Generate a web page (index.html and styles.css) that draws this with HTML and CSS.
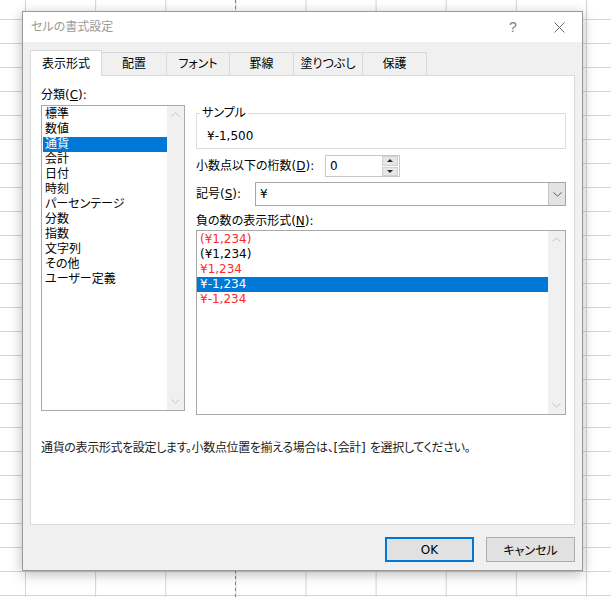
FILE: index.html
```html
<!DOCTYPE html>
<html lang="ja">
<head>
<meta charset="utf-8">
<title>セルの書式設定</title>
<link rel="stylesheet" href="styles.css">
</head>
<body>
<div class="dialog">
  <div class="titlebar">
    <span class="title">セルの書式設定</span>
    <span class="cap help">?</span>
    <span class="cap close"><svg width="11" height="11" viewBox="0 0 11 11"><path d="M0.5 0.5 L10.5 10.5 M10.5 0.5 L0.5 10.5" stroke="#6a6a6a" stroke-width="1" fill="none"/></svg></span>
  </div>
  <div class="dbody">
    <div class="tabs">
      <div class="tab active t1">表示形式</div>
      <div class="tab t2">配置</div>
      <div class="tab t3">フォント</div>
      <div class="tab t4">罫線</div>
      <div class="tab t5">塗りつぶし</div>
      <div class="tab t6">保護</div>
    </div>
    <div class="panel">
      <div class="cols">
        <div class="leftcol">
          <div class="lbl">分類(<u>C</u>):</div>
          <div class="listbox cat">
            <ul class="items">
              <li>標準</li>
              <li>数値</li>
              <li class="sel">通貨</li>
              <li>会計</li>
              <li>日付</li>
              <li>時刻</li>
              <li>パーセンテージ</li>
              <li>分数</li>
              <li>指数</li>
              <li>文字列</li>
              <li>その他</li>
              <li>ユーザー定義</li>
            </ul>
            <div class="vscroll">
              <span class="arrow"><svg width="9" height="5" viewBox="0 0 9 5"><path d="M0.5 4.5 L4.5 0.8 L8.5 4.5" fill="none" stroke="#c4c4c4"/></svg></span>
              <span class="arrow"><svg width="9" height="5" viewBox="0 0 9 5"><path d="M0.5 0.5 L4.5 4.2 L8.5 0.5" fill="none" stroke="#c4c4c4"/></svg></span>
            </div>
          </div>
        </div>
        <div class="rightcol">
          <fieldset class="sample">
            <legend>サンプル</legend>
            <div class="sval">¥-1,500</div>
          </fieldset>
          <div class="row spinrow">
            <span class="rlbl wdec">小数点以下の桁数(<u>D</u>):</span>
            <div class="spin">
              <span class="spinval">0</span>
              <div class="spinbtns">
                <span class="sb up"></span>
                <span class="sb down"></span>
              </div>
            </div>
          </div>
          <div class="row comborow">
            <span class="rlbl wsym">記号(<u>S</u>):</span>
            <div class="combo">
              <span class="comboval">¥</span>
              <span class="dropbtn"><svg width="9" height="5" viewBox="0 0 9 5"><path d="M0.5 0.5 L4.5 4.2 L8.5 0.5" fill="none" stroke="#606060"/></svg></span>
            </div>
          </div>
          <div class="lbl neglbl">負の数の表示形式(<u>N</u>):</div>
          <div class="listbox neg">
            <ul class="items negitems">
              <li class="red">(¥1,234)</li>
              <li>(¥1,234)</li>
              <li class="red">¥1,234</li>
              <li class="sel">¥-1,234</li>
              <li class="red">¥-1,234</li>
            </ul>
            <div class="vscroll">
              <span class="arrow"><svg width="9" height="5" viewBox="0 0 9 5"><path d="M0.5 4.5 L4.5 0.8 L8.5 4.5" fill="none" stroke="#c4c4c4"/></svg></span>
              <span class="arrow"><svg width="9" height="5" viewBox="0 0 9 5"><path d="M0.5 0.5 L4.5 4.2 L8.5 0.5" fill="none" stroke="#c4c4c4"/></svg></span>
            </div>
          </div>
        </div>
      </div>
      <p class="desc">通貨の表示形式を設定します。小数点位置を揃える場合は、[会計] を選択してください。</p>
    </div>
    <div class="buttons">
      <button class="btn default">OK</button>
      <button class="btn">キャンセル</button>
    </div>
  </div>
</div>
</body>
</html>
```

FILE: styles.css
```css
* { box-sizing: border-box; }
html, body { margin: 0; padding: 0; }
body {
  width: 611px;
  height: 597px;
  overflow: hidden;
  position: relative;
  background-color: #fff;
  background-image:
    repeating-linear-gradient(to bottom, #808080 0 3px, transparent 3px 6px),
    linear-gradient(to right, #d4d4d4 1px, transparent 1px),
    linear-gradient(to bottom, #d4d4d4 1px, transparent 1px);
  background-size: 1px 100%, 70.125px 100%, 100% 24px;
  background-position: 235px 0, 25px 0, 0 19px;
  background-repeat: no-repeat, repeat-x, repeat-y;
  font-family: "DejaVu Sans", "Noto Sans CJK JP", sans-serif;
  font-size: 12px;
  font-feature-settings: "palt";
  color: #000;
}

.dialog {
  position: absolute;
  left: 22px;
  top: 11px;
  width: 561px;
  height: 560px;
  border: 1px solid #9a9a9a;
  background: #f0f0f0;
  box-shadow: 0 3px 12px rgba(0, 0, 0, 0.28);
  display: flex;
  flex-direction: column;
}

.titlebar {
  height: 30px;
  background: #fff;
  display: flex;
  align-items: center;
}
.title {
  flex: 1;
  padding-left: 8px;
  color: #9a9a9a;
  line-height: 16px;
}
.cap {
  width: 46px;
  height: 30px;
  display: flex;
  align-items: center;
  justify-content: center;
}
.help {
  font-family: "Liberation Sans", sans-serif;
  font-size: 14px;
  color: #808080;
}

.dbody {
  flex: 1;
  padding: 8px 0 0 7px;
}

.tabs {
  display: flex;
  align-items: flex-end;
  height: 25px;
}
.tab {
  height: 23px;
  border: 1px solid #d9d9d9;
  border-bottom: 0;
  margin-right: -1px;
  display: flex;
  align-items: center;
  justify-content: center;
  line-height: 14px;
  background: #f0f0f0;
}
.tab.active {
  height: 26px;
  background: #fff;
  margin-bottom: -1px;
  position: relative;
  z-index: 1;
}
.t1 { width: 72px; }
.t2 { width: 66px; }
.t3 { width: 64px; }
.t4 { width: 65px; }
.t5 { width: 70px; }
.t6 { width: 65px; }

.panel {
  width: 545px;
  height: 450px;
  background: #fff;
  border: 1px solid #d9d9d9;
  padding: 10px 0 0 10px;
}

.cols {
  display: flex;
  align-items: flex-start;
  gap: 11px;
}

.lbl {
  line-height: 18px;
  height: 18px;
}
.leftcol { width: 144px; }

.listbox {
  display: flex;
  border: 1px solid #a9a9a9;
  background: #fff;
  margin-top: 1px;
}
.cat { width: 144px; height: 306px; }
.neg { width: 370px; height: 185px; }

.items {
  flex: 1;
  list-style: none;
  margin: 0;
  padding: 1px 0 0 1px;
}
.items li {
  height: 15px;
  line-height: 15px;
  padding-left: 2px;
  white-space: nowrap;
}
.negitems { padding: 1px 0 0 0; }
.negitems li { padding-left: 3px; }
.items li.sel { background: #0078d7; color: #fff; }
.items li.red { color: #ff2a2a; }

.vscroll {
  width: 17px;
  background: #f0f0f0;
  display: flex;
  flex-direction: column;
  justify-content: space-between;
}
.arrow {
  height: 17px;
  display: flex;
  align-items: center;
  justify-content: center;
}

.rightcol {
  width: 370px;
  margin-top: 20px;
}

.sample {
  margin: 0;
  padding: 0;
  min-width: 0;
  border: 1px solid #dcdcdc;
}
.sample legend {
  margin-left: 3px;
  padding: 0 2px;
  line-height: 14px;
}
.sval {
  padding: 8px 0 4px 10px;
  line-height: 16px;
}

.row {
  display: flex;
  align-items: center;
}
.rlbl { line-height: 16px; }
.spinrow { margin-top: 6px; height: 22px; }
.comborow { margin-top: 5px; height: 24px; }
.wdec { width: 129px; }
.wsym { width: 59px; }

.spin {
  width: 75px;
  height: 22px;
  border: 1px solid #c8c8c8;
  display: flex;
  background: #fff;
}
.spinval {
  flex: 1;
  padding-left: 4px;
  line-height: 20px;
}
.spinbtns {
  width: 17px;
  display: flex;
  flex-direction: column;
  gap: 1px;
  padding: 0 1px 0 0;
}
.sb {
  flex: 1;
  background: #e6e6e6;
  border: 1px solid #d0d0d0;
  display: flex;
  align-items: center;
  justify-content: center;
}
.sb.up::before {
  content: "";
  border-left: 3px solid transparent;
  border-right: 3px solid transparent;
  border-bottom: 3px solid #2b2b2b;
}
.sb.down::before {
  content: "";
  border-left: 3px solid transparent;
  border-right: 3px solid transparent;
  border-top: 3px solid #2b2b2b;
}

.combo {
  flex: 1;
  height: 24px;
  border: 1px solid #a6a6a6;
  display: flex;
  background: #fff;
}
.comboval {
  flex: 1;
  padding-left: 4px;
  line-height: 22px;
}
.dropbtn {
  width: 17px;
  background: #e3e3e3;
  border-left: 1px solid #c2c2c2;
  display: flex;
  align-items: center;
  justify-content: center;
}

.neglbl {
  margin-top: 7px;
  line-height: 16px;
  height: 16px;
}

.desc {
  margin: 25px 0 0 0;
  line-height: 16px;
  color: #222;
  letter-spacing: -0.35px;
  word-spacing: 1px;
}

.buttons {
  width: 545px;
  display: flex;
  justify-content: flex-end;
  gap: 12px;
  margin-top: 12px;
}
.btn {
  width: 89px;
  height: 25px;
  padding: 0;
  font: inherit;
  color: #000;
  background: #e1e1e1;
  border: 1px solid #adadad;
}
.btn.default {
  border-color: #0078d7;
  box-shadow: inset 0 0 0 1px #0078d7;
}
```
